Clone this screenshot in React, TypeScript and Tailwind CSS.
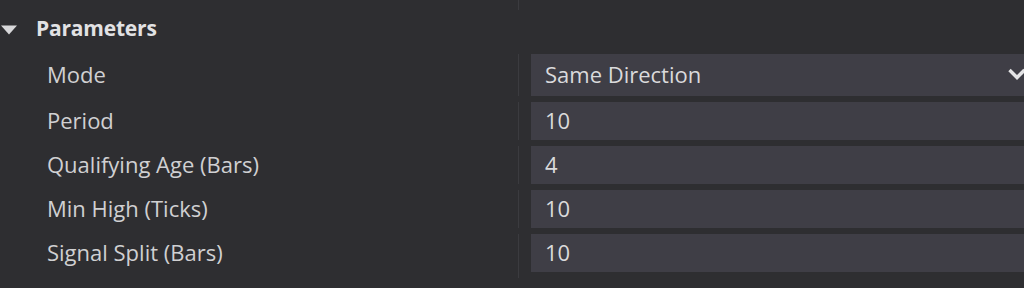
import React from 'react';

const rows = [
    { label: 'Mode', value: 'Same Direction', select: true },
    { label: 'Period', value: '10' },
    { label: 'Qualifying Age (Bars)', value: '4' },
    { label: 'Min High (Ticks)', value: '10' },
    { label: 'Signal Split (Bars)', value: '10' },
];

const App = () => {
    return (
        <div
            className="w-[1024px] h-[288px] overflow-hidden bg-[#2e2e31] text-[#d4d4d6]"
            style={{ fontFamily: '"Open Sans", "Noto Sans", sans-serif' }}
        >
            <div className="flex h-[10px]">
                <div className="w-[519px] border-r border-[#3b3b3f]" />
            </div>

            <div className="flex items-center h-[38px]">
                <svg width="18" height="12" viewBox="0 0 18 12" className="ml-[0px] mt-[1px]">
                    <path d="M1 1.5 L17 1.5 L9 10.5 Z" fill="#d8d8da" />
                </svg>
                <span className="ml-[18px] text-[21px] font-bold text-[#e2e2e4] tracking-[-0.2px]">Parameters</span>
            </div>

            <div>
                {rows.map((row) => (
                    <div key={row.label} className="flex pt-[6px]">
                        <div className="w-[519px] border-r border-[#3b3b3f] flex items-center pl-[47px] text-[22px] text-[#d0d0d2] leading-none">
                            <span className="-mt-[2px]">{row.label}</span>
                        </div>
                        <div
                            className={`ml-[12px] flex-1 flex items-center pl-[14px] bg-[#3f3e46] text-[22px] text-[#dadadc] leading-none ${
                                row.select ? 'h-[42px]' : 'h-[38px]'
                            }`}
                        >
                            <span className="flex-1 -mt-[2px]">{row.value}</span>
                            {row.select && (
                                <svg width="20" height="16" viewBox="0 0 20 16" className="mr-[-3px] -mt-[2px]">
                                    <path d="M2.5 4 L10 11.5 L17.5 4" fill="none" stroke="#e4e4e6" strokeWidth="3.4" />
                                </svg>
                            )}
                        </div>
                    </div>
                ))}
                <div className="flex h-[6px]">
                    <div className="w-[519px] border-r border-[#3b3b3f]" />
                </div>
            </div>
        </div>
    );
};

export default App;
